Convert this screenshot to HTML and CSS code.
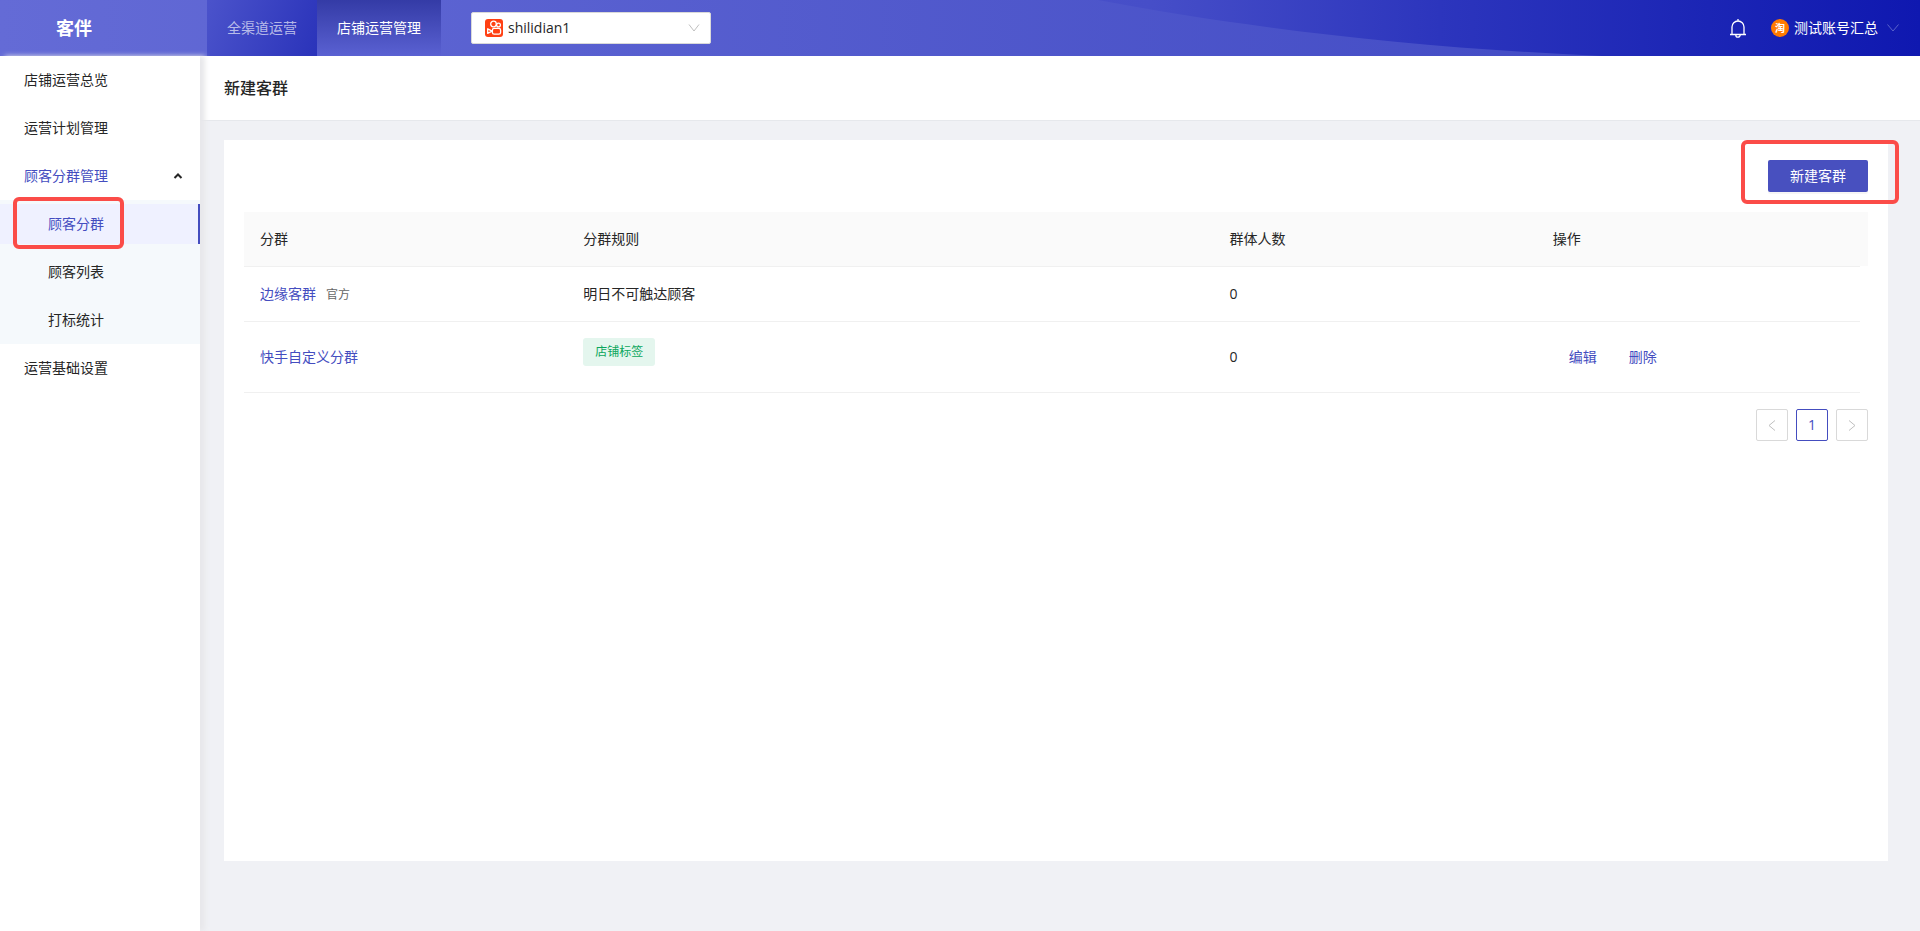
FILE: index.html
```html
<!DOCTYPE html>
<html lang="zh-CN">
<head>
<meta charset="utf-8">
<title>客伴</title>
<link rel="stylesheet" href="styles.css">
</head>
<body>
<header class="topbar">
  <svg class="topbar-curve" viewBox="0 0 1920 56" preserveAspectRatio="none" aria-hidden="true">
    <defs>
      <linearGradient id="wave" x1="0" x2="1600" y1="0" y2="0" gradientUnits="userSpaceOnUse">
        <stop offset="0" stop-color="#646bd6"/>
        <stop offset="1" stop-color="#434cc5"/>
      </linearGradient>
    </defs>
    <path fill="url(#wave)" d="M0 0H1098C1245 28 1420 48 1602 56H0Z"/>
  </svg>
  <div class="brand">客伴</div>
  <nav class="tabs">
    <a class="tab" href="#">全渠道运营</a>
    <a class="tab tab-active" href="#">店铺运营管理</a>
  </nav>
  <button class="shop-select" type="button" aria-haspopup="listbox">
    <svg class="shop-logo" viewBox="0 0 18 18" aria-hidden="true">
      <rect width="18" height="18" rx="3" fill="#ff4013"/>
      <g fill="none" stroke="#fff" stroke-width="1.3">
        <circle cx="8.500" cy="5" r="2.800"/>
        <circle cx="13.500" cy="6" r="1.900"/>
        <rect x="7.400" y="9.400" width="8.200" height="5.800" rx="1.800"/>
        <path d="M2.700 9.800v4.600l4.500-2.300z" stroke-linejoin="round"/>
      </g>
    </svg>
    <span class="shop-name">shilidian1</span>
    <svg class="select-arrow" viewBox="0 0 12 12" aria-hidden="true"><path d="M1 2.500l5 6.500 5-6.500"/></svg>
  </button>
  <button class="bell" type="button" aria-label="消息">
    <svg viewBox="0 0 18 20" aria-hidden="true">
      <path d="M9 1v1.500M3 16.500V9a6 6 0 0 1 12 0v7.500M1 16.500h16M6.800 17a2.200 2.200 0 0 0 4.400 0"/>
    </svg>
  </button>
  <button class="account" type="button">
    <span class="avatar">淘</span>
    <span>测试账号汇总</span>
    <svg class="account-arrow" viewBox="0 0 14 12" aria-hidden="true"><path d="M1.500 2.500l5.500 6.500 5.500-6.500"/></svg>
  </button>
</header>
<div class="body">
  <aside class="sidebar">
    <nav class="menu">
      <a class="item" href="#">店铺运营总览</a>
      <a class="item" href="#">运营计划管理</a>
      <button class="item item-open" type="button" aria-expanded="true">顾客分群管理
        <svg class="caret" viewBox="0 0 10 6" aria-hidden="true"><path d="M1.500 5l3.500-3.500L8.500 5"/></svg>
      </button>
      <div class="submenu">
        <a class="item sub item-selected" href="#">顾客分群<span class="mark mark-menu"></span></a>
        <a class="item sub" href="#">顾客列表</a>
        <a class="item sub" href="#">打标统计</a>
      </div>
      <a class="item" href="#">运营基础设置</a>
    </nav>
  </aside>
  <main class="main">
    <h1 class="page-title">新建客群</h1>
    <section class="card">
      <div class="toolbar">
        <button class="primary" type="button">新建客群<span class="mark mark-button"></span></button>
      </div>
      <div class="table-wrap">
        <table class="table">
          <thead>
            <tr><th>分群</th><th class="wide">分群规则</th><th>群体人数</th><th>操作</th></tr>
          </thead>
          <tbody>
            <tr><td><a href="#">边缘客群</a><span class="official">官方</span></td><td>明日不可触达顾客</td><td>0</td><td></td></tr>
            <tr class="tall"><td><a href="#">快手自定义分群</a></td><td class="tag-cell"><span class="tag">店铺标签</span></td><td>0</td><td><div class="actions"><a href="#">编辑</a><a href="#">删除</a></div></td></tr>
          </tbody>
        </table>
      </div>
      <nav class="pager" aria-label="分页">
        <button class="page" type="button" disabled aria-label="上一页"><svg viewBox="0 0 12 12" aria-hidden="true"><path d="M9 1.500L3 6.500l6 5"/></svg></button>
        <button class="page page-current" type="button">1</button>
        <button class="page" type="button" disabled aria-label="下一页"><svg viewBox="0 0 12 12" aria-hidden="true"><path d="M3 1.500l6 5-6 5"/></svg></button>
      </nav>
    </section>
  </main>
</div>
</body>
</html>
```
FILE: styles.css
```css
* { box-sizing: border-box; }
body {
  margin: 0;
  min-height: 100vh;
  display: flex;
  flex-direction: column;
  font: 14px/22px "Open Sans", "Noto Sans CJK SC", sans-serif;
  color: #262626;
  background: #f0f1f5;
}
a { color: #444dbf; text-decoration: none; }
button { font: inherit; color: inherit; border: 0; padding: 0; background: none; cursor: pointer; }
svg { display: block; fill: none; }

.topbar {
  position: relative;
  display: flex;
  align-items: center;
  height: 56px;
  color: #fff;
  background: linear-gradient(90deg, #5a61d2 0%, #464ec8 60%, #2c35bd 75%, #1b25b5 89%, #0f18b0 100%);
}
.topbar-curve { position: absolute; inset: 0; width: 100%; height: 100%; }
.topbar > :not(.topbar-curve) { position: relative; }
.brand { width: 207px; padding-left: 56px; font-size: 18px; font-weight: 700; }
.tabs { display: flex; align-self: stretch; }
.tab {
  display: flex;
  align-items: center;
  padding: 0 20px;
  color: rgba(255, 255, 255, 0.65);
  background: linear-gradient(110deg, #4b53cb, #2a33ba);
}
.tab-active { color: #fff; background: linear-gradient(#343ba6, #5a61d2); }
.shop-select {
  display: flex;
  align-items: center;
  gap: 5px;
  width: 240px;
  height: 32px;
  margin-left: 30px;
  padding: 0 10px 0 13px;
  border: 1px solid #d9d9d9;
  border-radius: 2px;
  background: #fff;
  color: #262626;
}
.shop-logo { width: 18px; height: 18px; }
.shop-name { flex: 1; text-align: left; }
.select-arrow { width: 12px; height: 12px; stroke: #bfbfbf; }
.bell { margin-left: auto; }
.bell svg { width: 18px; height: 20px; stroke: #fff; stroke-width: 1.3; }
.account { display: flex; align-items: center; margin: 0 20px 0 24px; }
.avatar {
  width: 18px;
  height: 18px;
  margin-right: 5px;
  border-radius: 50%;
  background: #ff7a00;
  font-size: 10px;
  line-height: 18px;
  font-weight: 700;
}
.account-arrow { width: 14px; height: 12px; margin-left: 8px; stroke: #5a62cb; }

.body { flex: 1; display: flex; }
.sidebar {
  position: relative;
  flex: none;
  width: 200px;
  background: #fff;
  box-shadow: 5px 0 5px #e8e8eb;
}
.item {
  position: relative;
  display: flex;
  align-items: center;
  justify-content: space-between;
  width: 100%;
  height: 40px;
  padding: 0 17px 0 24px;
  color: #262626;
}
.menu, .submenu { display: flex; flex-direction: column; gap: 8px; padding: 4px 0; }
.submenu { margin: -4px 0; background: #f5f9fc; }
.sub { padding-left: 48px; }
.item-open { color: #444dbf; }
.item-selected { color: #444dbf; background: #eff1ff; border-right: 2px solid #444dbf; }
.caret { width: 10px; height: 6px; stroke: #262626; stroke-width: 2; }

.mark { position: absolute; border: 4px solid #fb4c48; border-radius: 6px; pointer-events: none; }
.mark-menu { left: 13px; top: -7px; width: 111px; height: 52px; }
.mark-button { left: -27px; top: -20px; width: 158px; height: 64px; }

.main { flex: 1; min-width: 0; display: flex; flex-direction: column; }
.page-title {
  margin: 0;
  padding: 20px 24px;
  font-size: 16px;
  line-height: 24px;
  font-weight: 500;
  background: #fff;
  border-bottom: 1px solid #e6e8ec;
}
.card { margin: 19px 32px 0 24px; padding: 20px; min-height: 721px; background: #fff; }
.toolbar { display: flex; justify-content: flex-end; margin-bottom: 20px; }
.primary {
  position: relative;
  width: 100px;
  height: 32px;
  border-radius: 2px;
  color: #fff;
  background: #4850bf;
  box-shadow: 0 2px 0 rgba(0, 0, 0, 0.04);
}
.table-wrap {
  padding-right: 8px;
  background: linear-gradient(#fafafa, #fafafa) 0 0 / 100% 54px no-repeat;
}
.table { width: 100%; table-layout: fixed; border-collapse: separate; border-spacing: 0; }
.table th, .table td { height: 55px; padding: 0 16px; text-align: left; font-weight: 400; border-bottom: 1px solid #f0f0f0; }
.table .wide { width: 40%; }
.table .tall td { height: 71px; }
.table .tag-cell { padding-bottom: 10px; }
.official { margin-left: 10px; font-size: 12px; color: #666; }
.tag {
  display: inline-block;
  padding: 3px 12px;
  border-radius: 3px;
  font-size: 12px;
  color: #0ba65c;
  background: #e4f6ee;
}
.actions { display: flex; gap: 32px; padding-left: 16px; }
.pager { display: flex; justify-content: flex-end; gap: 8px; margin-top: 16px; }
.page {
  display: flex;
  align-items: center;
  justify-content: center;
  width: 32px;
  height: 32px;
  border: 1px solid #d9d9d9;
  border-radius: 2px;
}
.page svg { width: 12px; height: 12px; stroke: #bfbfbf; }
.page-current { color: #444dbf; border-color: #444dbf; }
```
